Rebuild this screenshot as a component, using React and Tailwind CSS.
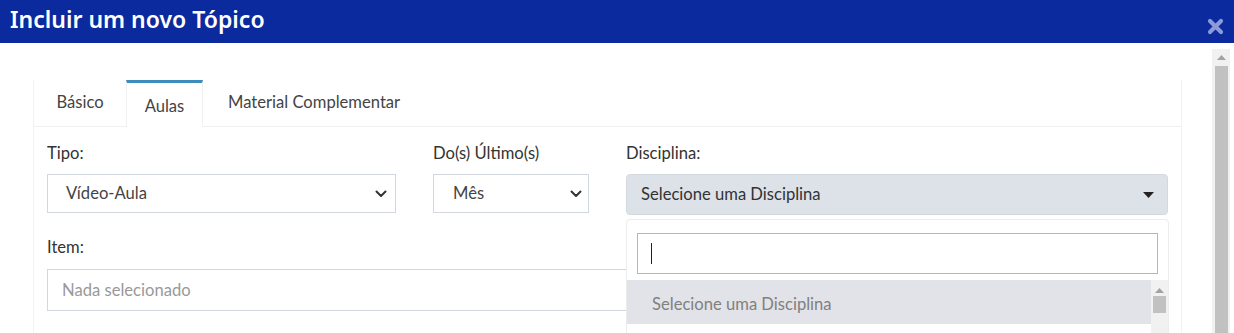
import React from "react";

function Chevron() {
  return (
    <svg width="12" height="8" viewBox="0 0 12 8" className="shrink-0">
      <path d="M1.5 1.5 L6 6 L10.5 1.5" fill="none" stroke="#333" strokeWidth="2" strokeLinecap="round" strokeLinejoin="round" />
    </svg>
  );
}

export default function App() {
  const body = { fontFamily: "Lato, 'Noto Sans', sans-serif" };
  return (
    <div className="w-[1234px] h-[333px] overflow-hidden bg-white relative" style={body}>
      {/* header */}
      <div className="h-[43px] bg-[#0a2a9e] flex items-center justify-between pl-[10px] pr-[10px]">
        <div className="text-white text-[23px] font-semibold leading-none pb-[5px]" style={{ fontFamily: "'Noto Sans', sans-serif" }}>
          Incluir um novo Tópico
        </div>
        <svg width="17" height="17" viewBox="0 0 17 17" className="mt-[10px]">
          <path d="M3 3 L14 14 M14 3 L3 14" stroke="#8c9bd8" strokeWidth="4.2" strokeLinecap="round" />
        </svg>
      </div>

      {/* body */}
      <div className="flex">
        <div className="pl-[33px] pt-[37px] w-[1182px]">
          {/* panel */}
          <div className="border-l border-r border-[#f2f2f2]">
            {/* tabs */}
            <div className="flex h-[47px] border-b border-[#f0f0f0] text-[16.6px] text-[#444]">
              <div className="w-[92px] flex items-center justify-center pb-[2px]">Básico</div>
              <div className="w-[77px] -mb-px bg-white border-t-[3px] border-t-[#3c8dbc] border-l border-r border-l-[#f0f0f0] border-r-[#f0f0f0] flex items-center justify-center pt-[2px] text-[#444]">Aulas</div>
              <div className="pl-[25px] flex items-center pb-[2px]">Material Complementar</div>
            </div>
            {/* content */}
            <div className="pl-[13px] pt-[16px] relative h-[240px] text-[16.6px]">
              <div className="flex gap-[37px]">
                <div className="w-[349px]">
                  <div className="text-[#333] leading-[20px] h-[20px]">Tipo:</div>
                  <div className="mt-[11px] h-[39px] border border-[#d2d6de] flex items-center justify-between pl-[18px] pr-[8px] text-[#444]">
                    <span>Vídeo-Aula</span>
                    <Chevron />
                  </div>
                </div>
                <div className="w-[156px]">
                  <div className="text-[#333] leading-[20px] h-[20px]">Do(s) Último(s)</div>
                  <div className="mt-[11px] h-[39px] border border-[#d2d6de] flex items-center justify-between pl-[19px] pr-[6px] text-[#444]">
                    <span>Mês</span>
                    <Chevron />
                  </div>
                </div>
                <div className="w-[542px]">
                  <div className="text-[#333] leading-[20px] h-[20px]">Disciplina:</div>
                  <div className="mt-[11px] h-[41px] rounded-[4px] bg-[#dde1e8] border border-[#d4d8df] flex items-center justify-between pl-[14px] pr-[13px] text-[#333]">
                    <span>Selecione uma Disciplina</span>
                    <svg width="11" height="6" viewBox="0 0 11 6"><path d="M0 0 H11 L5.5 6 Z" fill="#222" /></svg>
                  </div>
                </div>
              </div>

              <div className="mt-[22px] w-[1121px]">
                <div className="text-[#333] leading-[20px] h-[20px]">Item:</div>
                <div className="mt-[12px] h-[42px] border border-[#d2d6de] flex items-center pl-[14px] text-[#999]">
                  Nada selecionado
                </div>
              </div>

              {/* dropdown menu overlay */}
              <div className="absolute left-[592px] top-[92px] w-[543px] h-[140px] bg-white border border-[#ececec] rounded-t-[4px]">
                <div className="pt-[13px] pl-[10px] pr-[10px]">
                  <div className="h-[41px] border border-[#93c0dc] flex items-center pl-[13px]">
                    <div className="w-px h-[21px] bg-[#222]" />
                  </div>
                </div>
                <div className="mt-[6px] flex">
                  <div className="flex-1 h-[44px] bg-[#e2e3e8] flex items-center pl-[25px] pt-[4px] text-[#808080]">
                    Selecione uma Disciplina
                  </div>
                  <div className="w-[17px] h-[100px] bg-[#f1f1f1] flex flex-col items-center">
                    <svg width="9" height="5" viewBox="0 0 9 5" className="mt-[8px]"><path d="M0 5 L4.5 0 L9 5 Z" fill="#a3a3a3" /></svg>
                    <div className="mt-[3px] w-[13px] h-[17px] bg-[#c1c1c1]" />
                  </div>
                </div>
              </div>
            </div>
          </div>
        </div>

        {/* page scrollbar */}
        <div className="ml-[30px] mt-[6px] w-[18px] h-[300px] bg-[#f1f1f1] flex flex-col items-center">
          <svg width="9" height="5" viewBox="0 0 9 5" className="mt-[6px]"><path d="M0 5 L4.5 0 L9 5 Z" fill="#a3a3a3" /></svg>
          <div className="mt-[6px] w-[13px] flex-1 bg-[#c1c1c1]" />
        </div>
      </div>
    </div>
  );
}
